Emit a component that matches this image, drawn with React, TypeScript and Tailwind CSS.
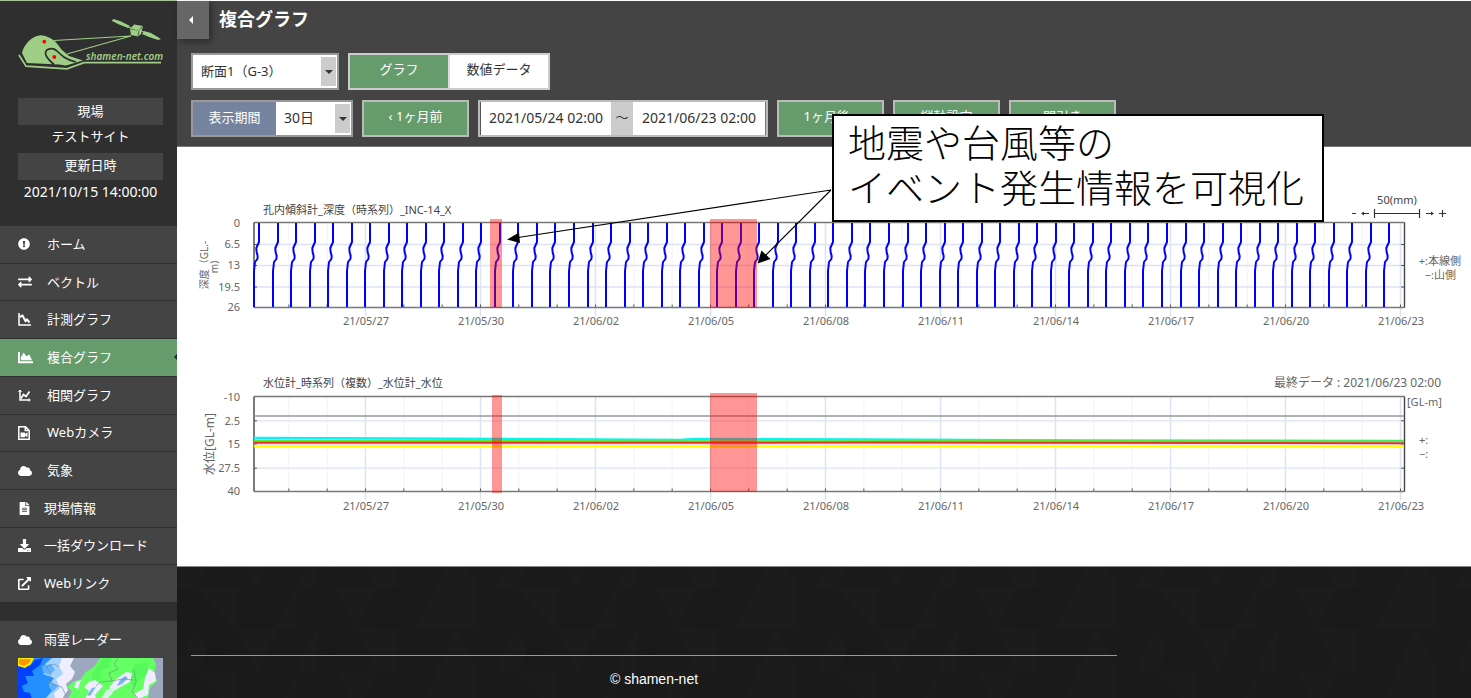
import React from "react";
import {
  FaExclamationCircle,
  FaExchangeAlt,
  FaChartArea,
  FaCloud,
  FaFileAlt,
  FaDownload,
  FaExternalLinkAlt,
} from "react-icons/fa";

const DAY = 115 / 3;
const PLOT_LEFT = 254;
const PLOT_RIGHT = 1404;
const FIRST_DAY = 365.5 - 2 * DAY;

const dateLabels = [
  "21/05/27",
  "21/05/30",
  "21/06/02",
  "21/06/05",
  "21/06/08",
  "21/06/11",
  "21/06/14",
  "21/06/17",
  "21/06/20",
  "21/06/23",
];

function Logo() {
  return (
    <svg viewBox="18 16 145 56" className="block h-14 w-full" role="img" aria-label="shamen-net.com">
      <g fill="#9fce86">
        <path d="M22 53 C24 45 30 38 37 36 Q43 34 50 38 C56 41 58 45 62 50 L69 56 L83 60.5 L66 65.5 L59 64.5 L27 63 Z" />
        <path d="M113 19 L120 21 L130 26 L128 28 L118 24 L112 21 Z" />
        <path d="M144 31 L151 33 L161 39 L158 40 L149 37 L142 34 Z" />
        <path d="M130 29 L134 24.5 L143 26 L141 34 L138 36.5 L131 35 Z" />
      </g>
      <path d="M131 29 L139 30.5 L142.5 26.5 M139 30.5 L138 36" fill="none" stroke="#2f2f2f" strokeWidth="0.7" />
      <path d="M128 27 L144 32" stroke="#9fce86" strokeWidth="1" />
      <path
        d="M54 64.5 C50 61 45 57 45.5 53 C46 48 53 47.5 57 51 C61 55 66 60 76 62"
        fill="none"
        stroke="#2f2f2f"
        strokeWidth="1.7"
      />
      <path d="M19 55 L26 66.2 L67 68.8 L84 62.7 H161" fill="none" stroke="#9fce86" strokeWidth="1.7" />
      <path d="M54 40.5 L131 36 L67 54" fill="none" stroke="#9fce86" strokeWidth="1.1" />
      <circle cx="44.300" cy="41.700" r="1.900" fill="#f00" />
      <circle cx="54.300" cy="57" r="1.900" fill="#f00" />
      <text x="86" y="60" fontSize="10" fontStyle="italic" fontWeight="600" fill="#9fce86">
        shamen-net.com
      </text>
    </svg>
  );
}

function FallingChartIcon() {
  return (
    <svg viewBox="0 0 13 13" className="h-[13px] w-[13px]" aria-hidden="true">
      <path d="M1 0 V12 H13" fill="none" stroke="currentColor" strokeWidth="1.5" />
      <path d="M1.500 4 L4.500 2.500 L7.500 8 L9 6.500 L11.500 9.500" fill="none" stroke="currentColor" strokeWidth="2" />
    </svg>
  );
}

function RisingChartIcon() {
  return (
    <svg viewBox="0 0 13 13" className="h-[13px] w-[13px]" aria-hidden="true">
      <path d="M2 1 V11 H12" fill="none" stroke="currentColor" strokeWidth="1.500" />
      <path d="M0.500 3 L2 1 L3.500 3 M10.500 9.300 L12.300 11 L10.500 12.700" fill="none" stroke="currentColor" />
      <path d="M3 9.500 L5.500 5.500 L8 7.500 L11.500 2.500" fill="none" stroke="currentColor" strokeWidth="1.700" />
    </svg>
  );
}

function FileCameraIcon() {
  return (
    <svg viewBox="0 0 12 14" className="h-[14px] w-[12px]" aria-hidden="true">
      <path d="M0.800 0.800 H7.500 L11.200 4.500 V13.200 H0.800 Z M7.300 1 V4.600 H11" fill="none" stroke="currentColor" strokeWidth="1.500" />
      <path d="M2.500 6.500 H7 V8 L9.500 6.300 V11.200 L7 9.700 V11.200 H2.500 Z" fill="currentColor" />
    </svg>
  );
}

const wide = "flex w-[29px] items-center";
const narrow = "flex w-[26px] items-center";

const menu: { label: string; icon: React.ReactNode; iconClass: string; active?: boolean }[] = [
  { label: "ホーム", icon: <FaExclamationCircle size={12} />, iconClass: wide },
  { label: "ベクトル", icon: <FaExchangeAlt size={14} />, iconClass: wide },
  { label: "計測グラフ", icon: <FallingChartIcon />, iconClass: wide },
  { label: "複合グラフ", icon: <FaChartArea size={15} />, iconClass: wide, active: true },
  { label: "相関グラフ", icon: <RisingChartIcon />, iconClass: wide },
  { label: "Webカメラ", icon: <FileCameraIcon />, iconClass: wide },
  { label: "気象", icon: <FaCloud size={14} />, iconClass: wide },
  { label: "現場情報", icon: <FaFileAlt size={13} />, iconClass: narrow },
  { label: "一括ダウンロード", icon: <FaDownload size={13} />, iconClass: narrow },
  { label: "Webリンク", icon: <FaExternalLinkAlt size={13} />, iconClass: narrow },
];

function RadarMap() {
  return (
    <svg viewBox="0 0 145 40" preserveAspectRatio="xMidYMin slice" className="block h-10 w-full" role="img" aria-label="雨雲レーダー">
      <rect width="145" height="41" fill="#9ba8bd" />
      <path d="M0 0 H56 L52 8 L57 14 L54 21 L48 26 L50 32 L44 41 H0 Z" fill="#eeeeff" />
      <path d="M0 0 H44 L41 8 L45 16 L38 21 L42 30 L36 35 L37 41 H0 Z" fill="#a5d2ff" />
      <path d="M0 0 H34 L27 6 L30 12 L25 16 L36 20 L31 27 L34 33 L27 41 H0 Z" fill="#2490ff" />
      <path d="M24 8 L33 6 L37 12 L31 17 L25 14 Z M34 24 L40 28 L35 34 L31 29 Z" fill="#5fb0ff" />
      <path d="M0 6 L12 8 L17 2 L25 0 L22 7 L14 13 L16 18 L7 18 L10 25 L4 28 L6 34 L12 35 L14 41 H0 Z" fill="#0040ff" />
      <path d="M0 0 H16 L13 6 L7 10 L0 8 Z" fill="#ffec00" />
      <path d="M1 1 H13 L11 5 L6 8 L1 6 Z" fill="#ff9800" />
      <path d="M82 0 H135 L138 6 L136 15 L139 23 L132 30 L130 41 H50 L54 33 L49 29 L55 24 L63 21 L68 14 L76 9 Z" fill="#63ff63" />
      <path d="M85 0 L94 0 L91 9 L82 13 L84 20 L76 24 L73 17 Z M116 7 L129 4 L131 15 L122 21 L117 29 L109 22 Z" fill="#55f95a" />
      <path d="M108 14 L114 15 L112 24 L104 28 L96 33 L91 30 L97 22 Z M71 24 L77 22 L85 28 L77 37 L78 41 H67 L71 33 L66 29 Z M58 24 L63 22 L60 31 L56 29 Z M131 10 L137 15 L138 23 L131 27 L130 37 L120 41 L116 36 L125 31 L127 20 Z" fill="#eeeeff" />
      <path d="M107 18 L110 20 L104 26 L99 28 L102 22 Z M74 30 L78 29 L72 38 L69 37 Z" fill="#7bb5ef" />
      <path d="M88 32 L98 29 L94 36 L89 41 H83 Z" fill="#cff7dd" />
      <path d="M100 0 L96 6 L100 11 L91 15 L94 23 L82 24 L78 28 M116 12 L118 24 L114 34 L121 41 M28 9 L33 15 L30 25 L44 29 L48 38 M28 9 L36 6 L41 9 M94 23 L104 21 L116 22" fill="none" stroke="#6e8a80" strokeWidth="0.600" />
    </svg>
  );
}

function Sidebar() {
  return (
    <aside className="flex w-[177px] shrink-0 flex-col border-t border-[#a9c49a] bg-[#2f2f2f] text-[13px] text-white">
      <a href="#top" className="ml-[18px] mr-[14px] mt-[15px] block">
        <Logo />
      </a>
      <dl className="ml-[18px] mr-[14px] mt-[26px] text-center">
        <dt className="h-[27px] bg-[#444] leading-[26px]">現場</dt>
        <dd className="h-7 leading-[22px]">テストサイト</dd>
        <dt className="h-[27px] bg-[#444] leading-[24px]">更新日時</dt>
        <dd className="h-[46px] whitespace-nowrap text-[14px] leading-[24px]">2021/10/15 14:00:00</dd>
      </dl>
      <nav>
        <ul className="grid h-[377px] grid-rows-10">
          {menu.map((item) => (
            <li key={item.label} className="relative border-b border-[#2f2f2f]">
              <a
                href="#menu"
                className={
                  item.active
                    ? "flex h-full items-center bg-[#669c6b] pl-[18px]"
                    : "flex h-full items-center bg-[#444] pl-[18px]"
                }
              >
                <span className={item.iconClass}>{item.icon}</span>
                <span className="pb-px leading-5">{item.label}</span>
              </a>
              {item.active && (
                <span className="absolute right-0 top-1/2 h-0 w-0 -translate-y-1/2 border-y-3 border-r-3 border-y-transparent border-r-[#222]" />
              )}
            </li>
          ))}
        </ul>
      </nav>
      <section className="mt-[18px] grow bg-[#444]">
        <h2 className="flex h-[37px] items-center pl-[18px]">
          <span className={narrow}>
            <FaCloud size={14} />
          </span>
          雨雲レーダー
        </h2>
        <div className="ml-[18px] mr-[14px]">
          <RadarMap />
        </div>
      </section>
    </aside>
  );
}

function Caret() {
  return (
    <span className="pointer-events-none absolute inset-y-[2px] right-px flex w-[15px] items-center justify-center bg-[#ccc]">
      <span className="h-0 w-0 border-x-4 border-t-4 border-x-transparent border-t-[#333]" />
    </span>
  );
}

const greenButton =
  "h-[37px] w-[107px] border-2 border-[#bbb] bg-[#669c6b] pb-[3px] text-[13px] text-white";

function Header() {
  return (
    <header className="h-[146px] border-b border-[#777] bg-[#444]">
      <div className="flex items-start">
        <button
          type="button"
          aria-label="メニューを閉じる"
          className="flex h-[38px] w-8 items-center justify-center bg-[#666] pr-1 shadow-[3px_3px_6px_rgba(0,0,0,0.35)]"
        >
          <span className="h-0 w-0 border-y-4 border-r-4 border-y-transparent border-r-white" />
        </button>
        <h1 className="ml-[10px] text-[18px] font-bold leading-[37px] text-white">複合グラフ</h1>
      </div>
      <div className="mt-[14px] flex gap-[9px] pl-[14px] text-[13px] text-[#333]">
        <div className="relative h-[37px] w-[148px] border-2 border-[#999] bg-white">
          <select aria-label="断面" className="h-full w-full appearance-none pl-2 outline-none">
            <option>断面1（G-3）</option>
          </select>
          <Caret />
        </div>
        <div className="flex h-[37px] w-[202px] border-2 border-[#ccc] bg-white">
          <button type="button" className="w-[98px] bg-[#669c6b] pb-[3px] text-white">
            グラフ
          </button>
          <button type="button" className="grow border-l-2 border-[#ddd] pb-[3px]">
            数値データ
          </button>
        </div>
      </div>
      <div className="mt-[10px] flex gap-[9px] pl-[14px] text-[#333]">
        <div className="flex h-[37px] w-[162px] border-2 border-[#999] bg-white text-[13px]">
          <label htmlFor="period" className="w-[83px] bg-[#75839e] text-center leading-[31px] text-white">
            表示期間
          </label>
          <div className="relative grow">
            <select id="period" className="h-full w-full appearance-none pb-[2px] pl-2 text-[14px] outline-none">
              <option>30日</option>
            </select>
            <Caret />
          </div>
        </div>
        <button type="button" className={greenButton}>
          ‹ 1ヶ月前
        </button>
        <div className="flex h-[37px] w-[290px] border-2 border-[#bbb] bg-white text-[14px]">
          <input
            aria-label="開始日時"
            defaultValue="2021/05/24 02:00"
            className="w-[131px] border-l border-[#555] pb-[3px] text-center outline-none"
          />
          <span className="grow bg-[#ccc] text-center text-[13px] leading-[31px]">～</span>
          <input
            aria-label="終了日時"
            defaultValue="2021/06/23 02:00"
            className="w-[133px] border-r border-[#777] pb-[3px] text-center outline-none"
          />
        </div>
        <button type="button" className={greenButton}>
          1ヶ月後 ›
        </button>
        <button type="button" className={greenButton}>
          縦軸設定
        </button>
        <button type="button" className={greenButton}>
          間引き
        </button>
      </div>
    </header>
  );
}

function PlotGrid({ top, bottom, rows }: { top: number; bottom: number; rows: number[] }) {
  const days = Array.from({ length: 30 }, (_, i) => FIRST_DAY + i * DAY).filter((x) => x < PLOT_RIGHT);
  return (
    <g fill="none">
      {days.map((x, i) =>
        i % 3 === 2 ? (
          <path key={i} d={`M${x} ${top} V${bottom + 9}`} stroke="#dce3f3" strokeWidth="1.500" />
        ) : (
          <path key={i} d={`M${x} ${top} V${bottom}`} stroke="#f3f3f5" />
        )
      )}
      {rows.map((y) => (
        <path key={y} d={`M${PLOT_LEFT} ${y} H${PLOT_RIGHT}`} stroke="#dce3f3" strokeWidth="1.300" />
      ))}
      {days.map((x, i) => (
        <path key={i} d={`M${x} ${bottom - 3} V${bottom}`} stroke="#555" />
      ))}
      {rows.map((y) => (
        <path key={y} d={`M${PLOT_LEFT} ${y} h3 M${PLOT_RIGHT} ${y} h-3`} stroke="#555" />
      ))}
      <path d={`M${PLOT_LEFT} ${top} H${PLOT_RIGHT + 0.5} M${PLOT_LEFT} ${bottom} H${PLOT_RIGHT + 0.5}`} stroke="#777" strokeWidth="1.400" />
      <path d={`M${PLOT_LEFT} ${top} V${bottom} M${PLOT_RIGHT + 0.5} ${top} V${bottom}`} stroke="#444" strokeWidth="1.400" />
    </g>
  );
}

function AxisLabels({ rows, dateY }: { rows: [string, number][]; dateY: number }) {
  return (
    <g fontSize="11" fill="#666">
      {rows.map(([label, y]) => (
        <text key={label} x="240" y={y + 4} textAnchor="end">
          {label}
        </text>
      ))}
      {dateLabels.map((label, i) => (
        <text key={label} x={366 + i * 115} y={dateY} textAnchor="middle">
          {label}
        </text>
      ))}
    </g>
  );
}

function DepthChart() {
  const profiles = Array.from({ length: 62 }, (_, i) => {
    const x = Math.round(259 + i * 18.53);
    return `M${x} 223 V242 L${x - 2.7} 248 L${x - 2.4} 252 L${x - 1.3} 256 L${x - 1.6} 259 L${x - 4} 262 L${x - 5} 271 V307`;
  }).join(" ");
  return (
    <svg viewBox="177 147 1294 210" className="block w-full" role="img" aria-label="孔内傾斜計">
      <PlotGrid top={222.5} bottom={307.5} rows={[244.5, 265.5, 287]} />
      <path d={profiles} fill="none" stroke="#0000ff" strokeWidth="2" strokeLinejoin="round" />
      <rect x="490" y="219" width="12" height="89" fill="#f00" fillOpacity="0.410" />
      <rect x="710" y="219" width="47" height="89" fill="#f00" fillOpacity="0.410" />
      <AxisLabels rows={[["0", 223], ["6.5", 244], ["13", 265], ["19.5", 287], ["26", 307]]} dateY={325} />
      <g fontSize="11" fill="#444">
        <text x="263" y="214">孔内傾斜計_深度（時系列）_INC-14_X</text>
        <text x="1397" y="204" textAnchor="middle">50(mm)</text>
      </g>
      <g fontSize="10" fill="#666" textAnchor="middle">
        <text transform="translate(208 265) rotate(-90)">深度（GL.-</text>
        <text transform="translate(218 267) rotate(-90)">m)</text>
      </g>
      <g fontSize="11" fill="#666" textAnchor="end">
        <text x="1461" y="265">+:本線側</text>
        <text x="1456" y="279">−:山側</text>
      </g>
      <path
        d="M1352 213.500 h4 M1362 213.500 h7 M1375 213.500 h45 M1374.500 209 v9 M1419.500 209 v9 M1426 213.500 h7 M1439 213.500 h7 M1442.500 210 v7"
        fill="none"
        stroke="#333"
        strokeWidth="1.200"
      />
      <path d="M1361 213.500 l3 -2 v4 Z M1434 213.500 l-3 -2 v4 Z" fill="#333" />
    </svg>
  );
}

function WaterChart() {
  return (
    <svg viewBox="177 357 1294 209" className="block w-full" role="img" aria-label="水位計">
      <PlotGrid top={396.5} bottom={491.5} rows={[420.8, 444.3, 468.2]} />
      <g fill="none" strokeWidth="2">
        <path d="M254 416 H1404" stroke="#999" strokeWidth="1.500" />
        <path d="M254 438 L400 438.500 L680 440 L695 439 L860 439.500 L1100 440.500 L1404 441" stroke="#00f5ff" strokeWidth="2.500" />
        <path d="M254 441 H480 L690 441.300 L1000 441 L1404 441.200" stroke="#5eea2e" />
        <path d="M254 445 H1404" stroke="#ecd9e6" strokeWidth="1" />
        <path d="M254 442.800 L690 442.800 L860 442.600 L1404 443.200" stroke="#e53420" />
        <path d="M254 446.500 H1404" stroke="#ff0" />
      </g>
      <rect x="492" y="395" width="10" height="98" fill="#f00" fillOpacity="0.410" />
      <rect x="710" y="393" width="47" height="99" fill="#f00" fillOpacity="0.410" />
      <AxisLabels rows={[["-10", 397], ["2.5", 421], ["15", 444], ["27.5", 468], ["40", 491]]} dateY={510} />
      <text x="263" y="387" fontSize="11" fill="#444">水位計_時系列（複数）_水位計_水位</text>
      <g fontSize="11" fill="#666">
        <text x="1441" y="387" textAnchor="end" fontSize="12">最終データ : 2021/06/23 02:00</text>
        <text x="1407" y="406">[GL-m]</text>
        <text x="1419" y="444">+:</text>
        <text x="1419" y="458">−:</text>
        <text transform="translate(214 444) rotate(-90)" textAnchor="middle" fontSize="12">
          水位[GL-m]
        </text>
      </g>
    </svg>
  );
}

function EventNote() {
  return (
    <>
      <svg viewBox="500 180 340 90" className="pointer-events-none absolute left-[323px] top-[179px] h-[90px] w-[340px]" aria-hidden="true">
        <path d="M831 190 L518 237.500 M831 190 L765 256" fill="none" stroke="#000" strokeWidth="1.100" />
        <path d="M507 239.500 L519 232.500 L520 243 Z M757.500 263.500 L761.500 250.500 L770.500 259 Z" fill="#000" />
      </svg>
      <p className="absolute left-[655px] top-[113px] w-[492px] whitespace-nowrap border-2 border-black bg-white px-[14px] pb-[10px] pt-1 text-[38px] font-light leading-[45px] text-black">
        地震や台風等の
        <br />
        イベント発生情報を可視化
      </p>
    </>
  );
}

function Footer() {
  return (
    <footer className="relative grow bg-[#1a1a1a]">
      <svg className="absolute inset-0 h-full w-full" aria-hidden="true">
        <defs>
          <pattern id="facets" width="320" height="84" patternUnits="userSpaceOnUse" y="-22">
            <path
              d="M0 42 L20 0 L40 42 Z M60 0 H100 L80 42 Z M120 42 L140 0 L140 42 Z M180 0 H220 V42 H200 Z M260 42 L280 0 L300 42 Z M20 42 H60 V84 Z M100 84 L120 42 V84 Z M160 42 H200 L180 84 Z M240 84 L260 42 H300 V84 Z"
              fill="#1c1c1c"
            />
            <path d="M40 0 L60 42 H20 Z M160 0 V42 L140 42 Z M80 42 L100 84 H60 Z M220 42 V84 H200 Z" fill="#191919" />
          </pattern>
        </defs>
        <rect width="100%" height="100%" fill="url(#facets)" />
      </svg>
      <div className="relative ml-[14px] max-w-[926px] pt-[88px]">
        <hr className="border-[#999]" />
        <p className="pb-2 pt-[13px] text-center font-['Liberation_Sans',Arial,sans-serif] text-[14px] leading-[21px] text-white">
          © shamen-net
        </p>
      </div>
    </footer>
  );
}

export default function App() {
  return (
    <div
      id="top"
      lang="ja"
      className="flex min-h-screen bg-[#1a1a1a] font-['Noto_Sans','Noto_Sans_CJK_JP',sans-serif]"
    >
      <Sidebar />
      <main className="relative flex min-w-0 grow flex-col border-t border-white">
        <Header />
        <div className="border-b border-[#888] bg-white">
          <DepthChart />
          <WaterChart />
        </div>
        <Footer />
        <EventNote />
      </main>
    </div>
  );
}
